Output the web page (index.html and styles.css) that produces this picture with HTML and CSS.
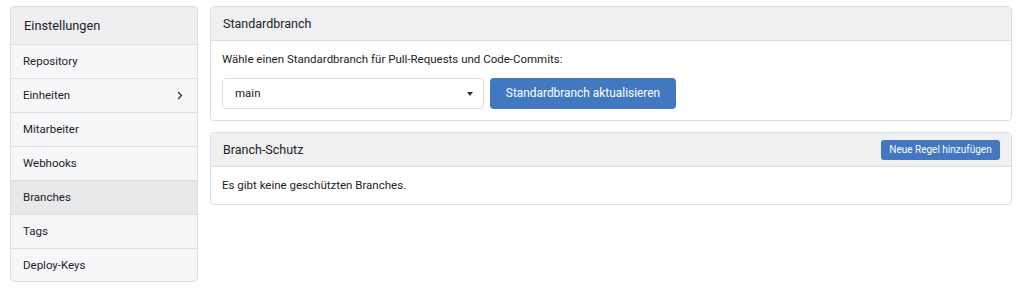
FILE: index.html
```html
<!DOCTYPE html>
<html>
<head>
<title>Einstellungen</title>
<meta charset="utf-8"/>
<link rel="stylesheet" href="styles.css">
</head>
<body>
<div class="page">
<div class="menu">
<div class="menu-head">Einstellungen</div>
<div class="menu-item">Repository</div>
<div class="menu-item">Einheiten
<svg class="arrow" width="6" height="9" viewBox="0 0 6 9"><polyline points="1,1 4.5,4.5 1,8" fill="none" stroke="#333" stroke-width="1.3"/></svg>
</div>
<div class="menu-item">Mitarbeiter</div>
<div class="menu-item">Webhooks</div>
<div class="menu-item active">Branches</div>
<div class="menu-item">Tags</div>
<div class="menu-item">Deploy-Keys</div>
</div>
<div class="content">
<div class="card">
<div class="card-head">Standardbranch</div>
<div class="card-body">
<div class="hint">Wähle einen Standardbranch für Pull-Requests und Code-Commits:</div>
<div class="row">
<div class="select">main <span class="caret"></span></div>
<div class="btn">Standardbranch aktualisieren</div>
</div>
</div>
</div>
<div class="card">
<div class="card-head">Branch-Schutz <div class="btn small">Neue Regel hinzufügen</div></div>
<div class="card-body">Es gibt keine geschützten Branches.</div>
</div>
</div>
</div>
</body>
</html>
```
FILE: styles.css
```css
body {
margin: 0;
background-color: white;
color: #1f2226;
font-family: Roboto, 'Liberation Sans', Arial, sans-serif;
font-size: 11.5px;
line-height: 15px;
}
.page {
display: flex;
align-items: flex-start;
gap: 12px;
padding: 6px 12px 0 10px;
}
.menu {
width: 186px;
flex-shrink: 0;
border: 1px solid #dcdee2;
border-radius: 4px;
background-color: #f6f7f9;
overflow: hidden;
}
.menu-head {
height: 37px;
line-height: 37px;
padding: 0 13px;
font-size: 12.8px;
background-color: #eeeff1;
border-bottom: 1px solid #dcdee2;
}
.menu-item {
display: flex;
justify-content: space-between;
align-items: center;
height: 33px;
padding: 0 12px;
border-bottom: 1px solid #dcdee2;
}
.menu-item:last-child {
height: 32px;
border-bottom: 0;
}
.menu-item.active {
background-color: #e7e8ea;
}
.arrow {
margin-right: 2px;
}
.content {
flex: 1;
display: flex;
flex-direction: column;
gap: 11px;
}
.card {
border: 1px solid #dcdee2;
border-radius: 4px;
overflow: hidden;
}
.card-head {
display: flex;
justify-content: space-between;
align-items: center;
height: 33px;
padding: 0 11px 0 12px;
font-size: 12.5px;
background-color: #eff0f2;
border-bottom: 1px solid #dcdee2;
}
.card-body {
padding: 11px 12px 11px 11px;
}
.hint {
margin: 0 0 11px;
}
.row {
display: flex;
gap: 6px;
}
.select {
width: 236px;
height: 29px;
padding: 0 12px;
display: flex;
justify-content: space-between;
align-items: center;
border: 1px solid #dcdee2;
border-radius: 4px;
}
.caret {
border-left: 3px solid transparent;
border-right: 3px solid transparent;
border-top: 4px solid #333;
margin-right: -2px;
}
.btn {
display: flex;
align-items: center;
justify-content: center;
width: 186px;
height: 31px;
font-size: 11.9px;
background-color: #4178c0;
color: white;
border-radius: 4px;
}
.btn.small {
width: 119px;
height: 20px;
font-size: 10px;
border-radius: 3px;
}
```
